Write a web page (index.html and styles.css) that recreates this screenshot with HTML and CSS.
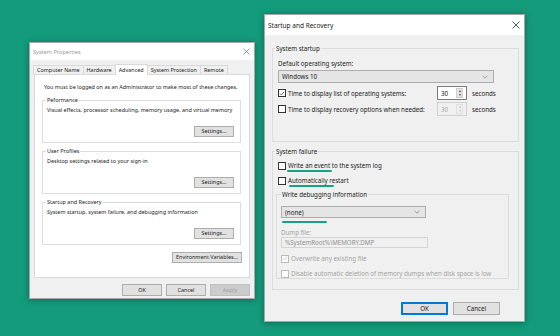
FILE: index.html
```html
<!DOCTYPE html>
<html>
<head>
<meta charset="utf-8">
<link rel="stylesheet" href="styles.css">
</head>
<body>
<div class="desktop">
  <section class="win sysprop">
    <header class="titlebar">
      <span class="title">System Properties</span>
      <svg class="close" width="7" height="7" viewBox="0 0 7 7"><path d="M0.5 0.5L6.5 6.5M6.5 0.5L0.5 6.5" stroke="#8a8a8a" stroke-width="0.8"/></svg>
    </header>
    <div class="body">
      <nav class="tabs">
        <span class="tab">Computer Name</span>
        <span class="tab">Hardware</span>
        <span class="tab active">Advanced</span>
        <span class="tab">System Protection</span>
        <span class="tab">Remote</span>
      </nav>
      <div class="panel">
        <p class="note">You must be logged on as an Administrator to make most of these changes.</p>
        <fieldset class="grp">
          <legend>Peformance</legend>
          <p>Visual effects, processor scheduling, memory usage, and virtual memory</p>
          <div class="btnrow"><button class="btn">Settings...</button></div>
        </fieldset>
        <fieldset class="grp">
          <legend>User Profiles</legend>
          <p>Desktop settings related to your sign-in</p>
          <div class="btnrow"><button class="btn">Settings...</button></div>
        </fieldset>
        <fieldset class="grp">
          <legend>Startup and Recovery</legend>
          <p>System startup, system failure, and debugging information</p>
          <div class="btnrow"><button class="btn">Settings...</button></div>
        </fieldset>
        <div class="btnrow env"><button class="btn wide">Environment Variables...</button></div>
      </div>
      <div class="actions">
        <button class="btn">OK</button>
        <button class="btn">Cancel</button>
        <button class="btn" disabled>Apply</button>
      </div>
    </div>
  </section>

  <section class="win startup">
    <header class="titlebar">
      <span class="title">Startup and Recovery</span>
      <svg class="close" width="8" height="8" viewBox="0 0 8 8"><path d="M0.5 0.5L7.5 7.5M7.5 0.5L0.5 7.5" stroke="#333" stroke-width="0.8"/></svg>
    </header>
    <div class="body">
      <fieldset class="grp boot">
        <legend>System startup</legend>
        <p class="lbl">Default operating system:</p>
        <div class="select os"><span>Windows 10</span><svg width="6" height="4" viewBox="0 0 6 4"><path d="M0.5 0.8L3 3.2L5.5 0.8" fill="none" stroke="#888" stroke-width="0.7"/></svg></div>
        <div class="row">
          <span class="cb checked"><svg width="7" height="7" viewBox="0 0 7 7"><path d="M1.2 3.6L2.8 5.2L5.9 1.6" fill="none" stroke="#222" stroke-width="0.8"/></svg></span>
          <span class="rowtext">Time to display list of operating systems:</span>
          <span class="spin"><span class="num">30</span><span class="arrows"><i class="up"></i><i class="dn"></i></span></span>
          <span class="unit">seconds</span>
        </div>
        <div class="row">
          <span class="cb"></span>
          <span class="rowtext">Time to display recovery options when needed:</span>
          <span class="spin off"><span class="num">30</span><span class="arrows"><i class="up"></i><i class="dn"></i></span></span>
          <span class="unit">seconds</span>
        </div>
      </fieldset>

      <fieldset class="grp fail">
        <legend>System failure</legend>
        <div class="row opt">
          <span class="cb"></span>
          <span class="rowtext">Write an event to the system log</span>
          <span class="mark m1"></span>
        </div>
        <div class="row opt">
          <span class="cb"></span>
          <span class="rowtext">Automatically restart</span>
          <span class="mark m2"></span>
        </div>
        <fieldset class="grp dbg">
          <legend>Write debugging information</legend>
          <div class="select none"><span>(none)</span><svg width="6" height="4" viewBox="0 0 6 4"><path d="M0.5 0.8L3 3.2L5.5 0.8" fill="none" stroke="#777" stroke-width="0.7"/></svg><span class="mark m3"></span></div>
          <p class="lbl dim">Dump file:</p>
          <div class="textbox">%SystemRoot%\MEMORY.DMP</div>
          <div class="row opt dim">
            <span class="cb checked off"><svg width="7" height="7" viewBox="0 0 7 7"><path d="M1.2 3.6L2.8 5.2L5.9 1.6" fill="none" stroke="#b5b5b5" stroke-width="0.8"/></svg></span>
            <span class="rowtext">Overwrite any existing file</span>
          </div>
          <div class="row opt dim">
            <span class="cb off"></span>
            <span class="rowtext">Disable automatic deletion of memory dumps when disk space is low</span>
          </div>
        </fieldset>
      </fieldset>
      <div class="actions">
        <button class="btn def">OK</button>
        <button class="btn">Cancel</button>
      </div>
    </div>
  </section>
</div>
</body>
</html>
```

FILE: styles.css
```css
* { box-sizing: border-box; }
body { margin: 0; font-family: "Noto Sans", "Segoe UI", sans-serif; color: #1a1a1a; }
p { margin: 0; }
.desktop { position: relative; width: 560px; height: 336px; background: #149b7c; overflow: hidden; }

.win { position: absolute; background: #f0f0f0; border: 1px solid #a8a8a8; box-shadow: 0 1px 6px rgba(0,0,0,.35); display: flex; flex-direction: column; }
.titlebar { background: #fff; display: flex; align-items: center; justify-content: space-between; flex: none; }
.body { flex: 1; display: flex; flex-direction: column; }

button.btn { font: inherit; color: #1a1a1a; background: #e1e1e1; border: 1px solid #adadad; padding: 0; margin: 0; }
button.btn:disabled { background: #cccccc; border-color: #bfbfbf; color: #a0a0a0; }

fieldset.grp { margin: 0; border: 1px solid #dcdcdc; min-width: 0; }
.btnrow { display: flex; justify-content: flex-end; }
.actions { display: flex; justify-content: flex-end; }

/* ---------- System Properties ---------- */
.sysprop { left: 29px; top: 42px; width: 226px; height: 257px; font-size: 5.45px; line-height: 8px; }
.sysprop .titlebar { height: 17px; padding: 0 4px 0 3px; }
.sysprop .title { color: #9b9b9b; font-size: 5.6px; }
.sysprop .body { padding: 4px 4px 0 3px; }
.tabs { display: flex; align-items: flex-end; height: 10px; position: relative; z-index: 1; }
.tab { height: 9px; line-height: 8px; padding: 0 3px; border: 1px solid #d9d9d9; border-bottom: none; border-right: none; background: #f0f0f0; white-space: nowrap; }
.tab:nth-child(5) { border-right: 1px solid #d9d9d9; }
.tab.active { height: 11px; margin-bottom: -1px; background: #fff; border-right: 1px solid #d9d9d9; padding: 1px 3px 0; }
.tab.active + .tab { border-left: none; }
.panel { background: #fff; border: 1px solid #d9d9d9; margin-left: 1px; margin-right: 0; height: 204px; padding: 8px 8px 0 7px; display: flex; flex-direction: column; }
.sysprop .note { margin: 0 0 5px 2px; white-space: nowrap; }
.sysprop fieldset.grp { padding: 2px 6px 5px 4px; margin-bottom: 4px; }
.sysprop legend { padding: 0 1px; margin-left: -1px; line-height: 8px; }
.sysprop .btnrow { margin-top: 12px; }
.sysprop .btn { width: 40px; height: 11px; line-height: 9px; }
.sysprop .btn.wide { width: 70px; }
.sysprop .env { margin-top: 3px; margin-right: -1px; }
.sysprop .actions { margin-top: 6px; gap: 4px; padding-right: 0; }
.sysprop .actions .btn { height: 12px; }

/* ---------- Startup and Recovery ---------- */
.startup { left: 264px; top: 14px; width: 261px; height: 308px; font-size: 6.2px; line-height: 9px; }
.startup .titlebar { height: 20px; padding: 0 4px 0 3px; }
.startup .title { color: #1a1a1a; font-size: 6.5px; }
.startup .body { padding: 9px 5px 0 7px; }
.startup fieldset.grp { padding: 0 5px 0 5px; }
.startup legend { padding: 0 1px; margin-left: -3px; line-height: 9px; }
.boot { height: 98px; margin-bottom: 5px !important; }
.boot .lbl { margin-top: 6px; }
.select { display: flex; align-items: center; justify-content: space-between; background: #e5e5e5; border: 1px solid #adadad; padding: 0 5px 0 3px; position: relative; }
.select.os { height: 13px; margin-top: 2px; width: 216px; }
.row { display: flex; align-items: center; position: relative; }
.boot .row { height: 14px; margin-top: 3px; }
.boot .row + .row { margin-top: 2px; }
.cb { width: 8px; height: 8px; border: 1px solid #333; background: #fff; flex: none; display: flex; align-items: center; justify-content: center; }
.cb.off { border-color: #bcbcbc; }
.rowtext { margin-left: 2px; white-space: nowrap; }
.boot .rowtext { width: 149px; }
.spin { width: 30px; height: 14px; border: 1px solid #7a7a7a; background: #fff; display: flex; align-items: center; justify-content: space-between; padding: 0 3px 0 3px; }
.spin.off { border-color: #d0d0d0; background: #f0f0f0; color: #a8a8a8; }
.arrows { display: flex; flex-direction: column; width: 7px; height: 10px; background: #e4e4e4; border: 1px solid #cfcfcf; align-items: center; justify-content: space-around; }
.spin.off .arrows { background: #f0f0f0; border-color: #e0e0e0; }
.arrows i { width: 0; height: 0; border-left: 1.5px solid transparent; border-right: 1.5px solid transparent; }
.arrows .up { border-bottom: 2px solid #444; }
.arrows .dn { border-top: 2px solid #444; }
.spin.off .arrows .up { border-bottom-color: #bbb; }
.spin.off .arrows .dn { border-top-color: #bbb; }
.unit { margin-left: 5px; }

.fail { height: 143px; padding-right: 9px !important; }
.fail .opt { height: 11px; margin-top: 4px; }
.mark { position: absolute; height: 2px; background: #17a085; border-radius: 1px; }
.m1 { left: 9px; top: 10px; width: 45px; }
.m2 { left: 11px; top: 10px; width: 45px; }
.m3 { left: 0; top: 14px; width: 45px; }
.dbg { margin-top: 4px !important; margin-left: -2px !important; height: 89px; padding: 0 4px !important; }
.dbg legend { margin-left: 0; }
.select.none { height: 12px; width: 145px; margin-top: 7px; }
.dim { color: #a3a3a3; }
.dbg .lbl { margin-top: 10px; }
.textbox { width: 147px; height: 11px; border: 1px solid #d4d4d4; background: #f0f0f0; color: #8f8f8f; line-height: 9px; padding-left: 3px; }
.dbg .opt { margin-top: 5px; height: 11px; }
.dbg .opt + .opt { margin-top: 4px; }

.startup .actions { margin-top: 12px; gap: 5px; padding-right: 19px; }
.startup .btn { width: 47px; height: 13px; line-height: 11px; }
.startup .btn.def { border: 1px solid #0078d7; box-shadow: inset 0 0 0 1px #0078d7; }
```
